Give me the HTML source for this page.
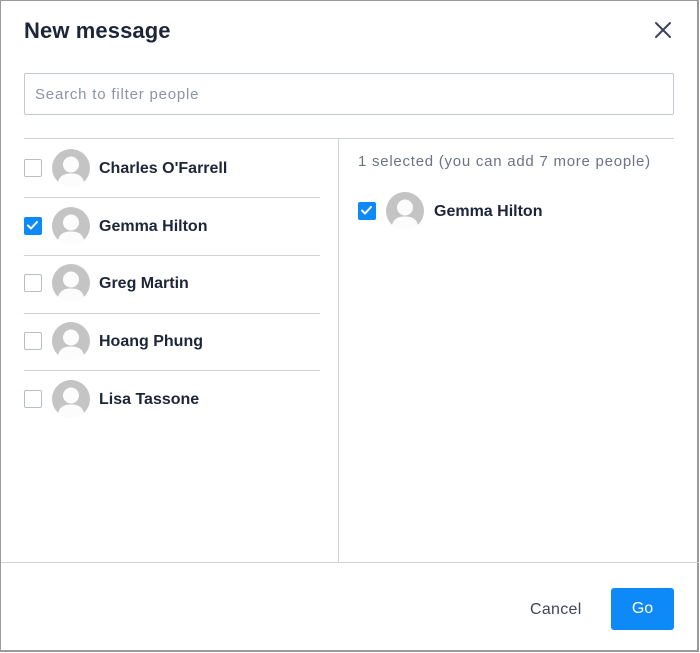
<!DOCTYPE html>
<html><head><style>
*{margin:0;padding:0;box-sizing:border-box}
body{width:700px;height:653px;background:#fff;font-family:"Liberation Sans",sans-serif;position:relative;overflow:hidden}
.frame{position:absolute;left:0;top:0;width:699px;height:652px;border:1px solid #9a9a9a;border-right-width:2px;border-bottom-width:2px}
.a{position:absolute}
h1{position:absolute;left:24px;top:18px;font-size:22px;font-weight:bold;color:#1d2639;letter-spacing:0.1px}
.search{left:24px;top:73px;width:650px;height:42px;border:1px solid #c3c8d6;border-radius:2px;color:#8c93a6;font-size:15px;padding:12px 10px;letter-spacing:0.8px}
.hl{height:1px;background:#cdd2de}
.cb{width:18px;height:18px;border:1.5px solid #b8bdca;border-radius:2px;background:#fff}
.cb.on{background:#0d8af7;border-color:#0d8af7}
.name{font-size:16px;font-weight:bold;color:#1d2639}
</style></head><body>
<div class="frame"></div>
<h1>New message</h1>
<svg class="a" style="left:654px;top:21px" width="18" height="18" viewBox="0 0 18 18"><path d="M2 2L16 16M16 2L2 16" stroke="#3c4558" stroke-width="2" stroke-linecap="round"/></svg>
<div class="a search">Search to filter people</div>
<div class="a hl" style="left:24px;top:138px;width:650px"></div>
<div class="a" style="left:338px;top:139px;width:1px;height:423px;background:#cdd2de"></div>
<div class="a hl" style="left:1px;top:562px;width:698px"></div>

<div class="a hl" style="left:24px;top:197px;width:296px"></div>
<div class="a hl" style="left:24px;top:255px;width:296px"></div>
<div class="a hl" style="left:24px;top:313px;width:296px"></div>
<div class="a hl" style="left:24px;top:370px;width:296px"></div>

<div class="a cb" style="left:24px;top:159px"></div>
<div class="a cb on" style="left:24px;top:217px"><svg width="15" height="15" viewBox="0 0 15 15"><path d="M3 7.5L6 10.5L12 4" stroke="#fff" stroke-width="2" fill="none" stroke-linecap="round" stroke-linejoin="round"/></svg></div>
<div class="a cb" style="left:24px;top:274px"></div>
<div class="a cb" style="left:24px;top:332px"></div>
<div class="a cb" style="left:24px;top:390px"></div>

<svg width="0" height="0" style="position:absolute"><defs><symbol id="av" viewBox="0 0 38 38"><circle cx="19" cy="19" r="19" fill="#c4c4c4"/><circle cx="19" cy="15.5" r="8" fill="#fff" opacity=".95"/><path d="M6 33C8 26 13 24.5 19 24.5S30 26 32 33A19 19 0 0 1 6 33Z" fill="#fff" opacity=".95"/></symbol></defs></svg>
<svg class="a" style="left:52px;top:149px" width="38" height="38"><use href="#av"/></svg>
<svg class="a" style="left:52px;top:207px" width="38" height="38"><use href="#av"/></svg>
<svg class="a" style="left:52px;top:264px" width="38" height="38"><use href="#av"/></svg>
<svg class="a" style="left:52px;top:322px" width="38" height="38"><use href="#av"/></svg>
<svg class="a" style="left:52px;top:380px" width="38" height="38"><use href="#av"/></svg>

<div class="a name" style="left:99px;top:160px">Charles O'Farrell</div>
<div class="a name" style="left:99px;top:218px">Gemma Hilton</div>
<div class="a name" style="left:99px;top:275px">Greg Martin</div>
<div class="a name" style="left:99px;top:333px">Hoang Phung</div>
<div class="a name" style="left:99px;top:391px">Lisa Tassone</div>

<div class="a" style="left:358px;top:153px;font-size:15px;color:#6b7385;letter-spacing:0.75px">1 selected (you can add 7 more people)</div>
<div class="a cb on" style="left:358px;top:202px"><svg width="15" height="15" viewBox="0 0 15 15"><path d="M3 7.5L6 10.5L12 4" stroke="#fff" stroke-width="2" fill="none" stroke-linecap="round" stroke-linejoin="round"/></svg></div>
<svg class="a" style="left:386px;top:192px" width="38" height="38"><use href="#av"/></svg>
<div class="a name" style="left:434px;top:203px">Gemma Hilton</div>

<div class="a" style="left:530px;top:601px;font-size:16px;color:#3c4558;letter-spacing:0.3px">Cancel</div>
<div class="a" style="left:611px;top:588px;width:63px;height:42px;background:#0d8af7;border-radius:3px;color:#fff;font-size:16px;text-align:center;line-height:42px">Go</div>
</body></html>
